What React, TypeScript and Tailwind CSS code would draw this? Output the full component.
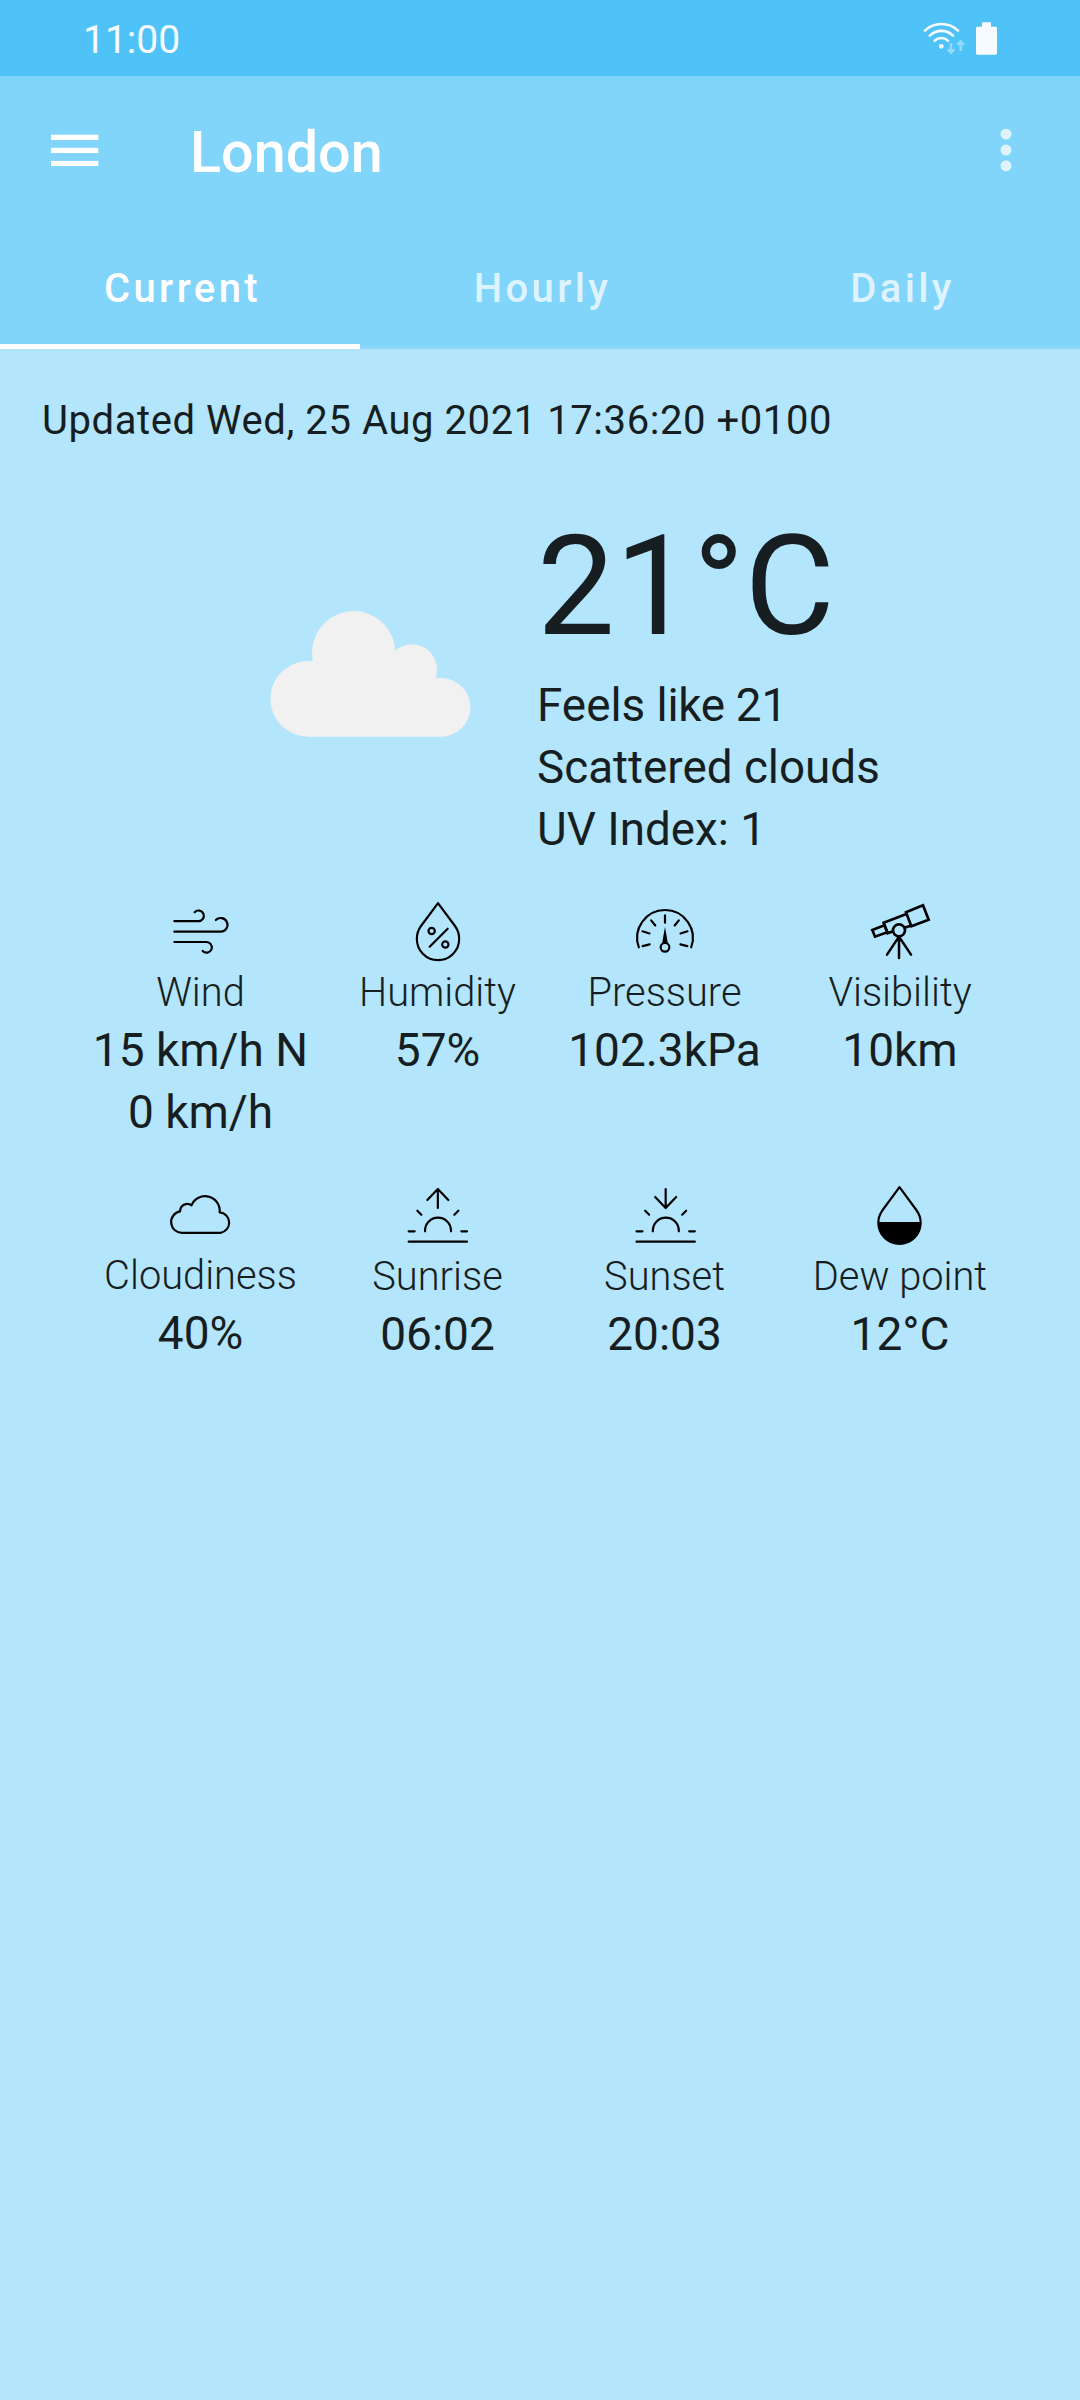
import React from "react";

function StatusIcons() {
  return (
    <svg viewBox="66 30 231 105" className="h-[35px] w-[77px]" fill="none" stroke="#f5fbff" strokeLinecap="round" strokeLinejoin="round">
      <g strokeWidth="8">
        <path d="M75 59A71 71 0 0 1 174 59" />
        <path d="M89.500 74A49.500 49.500 0 0 1 159 74" />
        <path d="M104 89A29 29 0 0 1 144 89" />
      </g>
      <circle cx="124" cy="106" r="7" fill="#f5fbff" stroke="none" />
      <g strokeWidth="7.500" opacity="0.42" strokeLinecap="butt" strokeLinejoin="miter">
        <path d="M153 97V124M143 115L153 125L163 115" />
        <path d="M182 120V93M172 102L182 91L192 102" />
      </g>
      <path d="M246 47V34H273V47H287Q291 47 291 51V127Q291 131 287 131H232Q228 131 228 127V51Q228 47 232 47Z" fill="#f5fbff" stroke="none" />
    </svg>
  );
}

function MenuIcon() {
  return (
    <svg viewBox="0 0 48 32" className="h-8 w-12" fill="#fff">
      <rect x="0" y="0.700" width="47.300" height="5.250" />
      <rect x="0" y="13.800" width="47.300" height="5.250" />
      <rect x="0" y="26.900" width="47.300" height="5.100" />
    </svg>
  );
}

function MoreIcon() {
  return (
    <svg viewBox="0 0 12 44" className="h-11 w-3" fill="#ddf3fe">
      <circle cx="6" cy="6.200" r="5.500" />
      <circle cx="6" cy="22" r="5.500" />
      <circle cx="6" cy="37.800" r="5.500" />
    </svg>
  );
}

function BigCloud() {
  return (
    <svg viewBox="0 0 660 450" className="mt-[93px] ml-[260px] h-[150px] w-[220px] shrink-0" fill="#f1f1f1">
      <circle cx="281" cy="158" r="125" />
      <circle cx="144.500" cy="296.500" r="113.500" />
      <circle cx="456" cy="208" r="75" />
      <circle cx="543" cy="322" r="88" />
      <path d="M144 183H160L400 155L460 160L528 234H543V410H144Z" />
    </svg>
  );
}

type IconProps = { viewBox: string; children: React.ReactNode };

function Icon({ viewBox, children }: IconProps) {
  return (
    <svg
      viewBox={viewBox}
      className="h-[60px] w-[60px] overflow-visible"
      fill="none"
      stroke="#000"
      strokeWidth="6.500"
      strokeLinecap="round"
      strokeLinejoin="round"
    >
      {children}
    </svg>
  );
}

const wind = (
  <Icon viewBox="62 30 180 180">
    <path d="M72 93.500H144A16 16 0 1 0 133 66.500" />
    <path d="M72 125H211A20.500 20.500 0 1 0 196.500 90" />
    <path d="M72 156H168A16 16 0 1 1 157 183" />
  </Icon>
);

const humidity = (
  <Icon viewBox="773 30 180 180">
    <path d="M863 39.500L812 108C804 119 799.500 132 799.500 147A63.500 63.500 0 0 0 926.500 147C926.500 132 922 119 914 108Z" />
    <circle cx="844" cy="123" r="9.500" />
    <circle cx="885" cy="163.500" r="9.500" />
    <path d="M838 170L892 116" />
  </Icon>
);

const pressure = (
  <Icon viewBox="253.500 30 180 180">
    <path d="M265 172A83.500 83.500 0 1 1 422 172" />
    <path d="M343.500 76V98M302 91L314.500 106.500M385 91L372.500 106.500M276 124L297 130.500M411 124L390 130.500M276.500 168.500L297.500 163M410.500 168.500L389.500 163" />
    <path d="M343.500 110L335 160H352Z" fill="#000" stroke="none" />
    <circle cx="343.500" cy="172" r="13" />
  </Icon>
);

const visibility = (
  <Icon viewBox="30 15 180 180">
    <g strokeWidth="8" strokeLinejoin="miter" strokeLinecap="butt">
      <path d="M73 91L37 105L45 125L82 112Z" />
      <path d="M99 109L83 115L71 83.500L139 57M133 98L152 92" />
      <path d="M138 52L189 31L206 74L154 94Z" />
      <circle cx="117" cy="106" r="18" />
    </g>
    <path d="M117 125L81 179M117 125V189M117 125L153 179" strokeWidth="7.500" />
  </Icon>
);

const cloudiness = (
  <Icon viewBox="60.500 45 180 180">
    <path d="M95 188.500A32.500 32.500 0 0 1 88 124A21.500 21.500 0 0 1 122 106A44 44 0 0 1 206.500 127A31 31 0 0 1 209 188.500Z" />
  </Icon>
);

const horizon = (
  <>
    <path d="M801 122L813 134M924 122L912 134M775 184H793M933 184H950" />
    <path d="M824 184V182A39 39 0 0 1 902 182V184" />
    <path d="M775 215H950" />
  </>
);

const sunrise = (
  <Icon viewBox="773 45 180 180">
    <path d="M862.500 58V114M831 90L862.500 57L894 90" />
    {horizon}
  </Icon>
);

const sunset = (
  <Icon viewBox="770.500 45 180 180">
    <path d="M862.500 57V113M831 81L862.500 114L894 81" />
    {horizon}
  </Icon>
);

const dew = (
  <Icon viewBox="960 45 180 180">
    <path d="M1048.500 51.500L998 120C990 131 985 143 985 158A63.500 63.500 0 0 0 1112 158C1112 143 1107 131 1099 120Z" />
    <path d="M985 156H1112V158A63.500 63.500 0 0 1 985 158Z" fill="#000" stroke="none" />
  </Icon>
);

type StatProps = { icon: React.ReactNode; label: string; values: string[]; gap: string };

function Stat({ icon, label, values, gap }: StatProps) {
  return (
    <div className="flex flex-col items-center">
      {icon}
      <div className={`${gap} text-[39.800px] leading-[55px] font-light whitespace-nowrap`}>{label}</div>
      <div className="-mt-px text-center text-[46px] leading-[62px] whitespace-nowrap">
        {values.map((v) => (
          <div key={v}>{v}</div>
        ))}
      </div>
    </div>
  );
}

function Tab({ label, active }: { label: string; active?: boolean }) {
  return (
    <div
      className={
        active
          ? "flex h-[126px] items-end justify-center border-b-[5px] border-white pb-[31px] pl-[5px] text-white"
          : "flex h-[126px] items-end justify-center border-b-[3px] border-[#8cd7fa] pb-[33px] pl-[5px] text-[#ddf3fe]"
      }
    >
      <span className="text-[40px] leading-[48px] font-medium tracking-[3.400px]">{label}</span>
    </div>
  );
}

export default function App() {
  return (
    <div className="flex h-[2400px] w-[1080px] flex-col bg-[#b3e5fc] font-['Roboto',sans-serif] text-[#171e21]">
      <div className="flex h-[76px] items-center justify-between bg-[#4fc3f7] pr-[81px] pl-[83px] text-[#f5fbff]">
        <span className="pt-[3px] text-[39px] leading-[46px]">11:00</span>
        <StatusIcons />
      </div>

      <header className="bg-[#81d4fa] text-white">
        <div className="flex h-[147px] items-center pr-[68px] pl-[51px]">
          <MenuIcon />
          <h1 className="ml-[91px] flex-1 pt-[7px] text-[57.500px] leading-[68px] font-medium">London</h1>
          <MoreIcon />
        </div>
        <nav className="grid grid-cols-3">
          <Tab label="Current" active />
          <Tab label="Hourly" />
          <Tab label="Daily" />
        </nav>
      </header>

      <main className="flex flex-col pt-[48px]">
        <p className="pl-[42px] text-[40px] leading-[48px] tracking-[0.570px]">
          Updated Wed, 25 Aug 2021 17:36:20 +0100
        </p>

        <section className="mt-[62px] flex items-start">
          <BigCloud />
          <div className="ml-[57px] flex flex-col">
            <div className="text-[138.600px] leading-[160px]">21°C</div>
            <div className="mt-[8px] text-[45.800px] leading-[62px]">
              Feels <span className="tracking-[-0.300px]">like </span>21
            </div>
            <div className="text-[45.800px] leading-[62px]">Scattered clouds</div>
            <div className="text-[45.800px] leading-[62px]">UV Index: 1</div>
          </div>
        </section>

        <section className="mt-[39px] grid grid-cols-[237px_237px_217px_254px] pl-[82px]">
          <Stat icon={wind} label="Wind" values={["15 km/h N", "0 km/h"]} gap="mt-[5px]" />
          <Stat icon={humidity} label="Humidity" values={["57%"]} gap="mt-[5px]" />
          <Stat icon={pressure} label="Pressure" values={["102.3kPa"]} gap="mt-[5px]" />
          <Stat icon={visibility} label="Visibility" values={["10km"]} gap="mt-[5px]" />
        </section>

        <section className="mt-[42px] grid grid-cols-[237px_237px_217px_254px] pl-[82px]">
          <Stat icon={cloudiness} label="Cloudiness" values={["40%"]} gap="mt-[3px]" />
          <Stat icon={sunrise} label="Sunrise" values={["06:02"]} gap="mt-[4px]" />
          <Stat icon={sunset} label="Sunset" values={["20:03"]} gap="mt-[4px]" />
          <Stat icon={dew} label="Dew point" values={["12°C"]} gap="mt-[4px]" />
        </section>
      </main>
    </div>
  );
}
